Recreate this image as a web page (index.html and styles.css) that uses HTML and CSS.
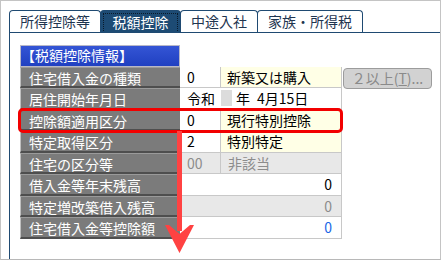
FILE: index.html
```html
<!DOCTYPE html>
<html lang="ja">
<head>
    <meta charset="UTF-8">
    <title>税額控除</title>
    <link rel="stylesheet" href="styles.css">
</head>
<body>
    <div class="frame">
        <div class="tabs">
            <div class="tab tab-1">所得控除等</div>
            <div class="tab tab-2 active"><span>税額控除</span></div>
            <div class="tab tab-3">中途入社</div>
            <div class="tab tab-4">家族・所得税</div>
        </div>

        <div class="panel">
            <div class="sheet">
                <div class="head">【税額控除情報】</div>
                <div class="blank"></div>

                <div class="label">住宅借入金の種類</div>
                <div class="val code">0</div>
                <div class="val desc">新築又は購入</div>
                <div class="btn-cell"><button class="btn" disabled>２以上(<u>T</u>)...</button></div>

                <div class="label">居住開始年月日</div>
                <div class="val date"><span class="era">令和</span><span class="box"></span><span>年</span><span class="md">4月15日</span></div>
                <div class="blank"></div>

                <div class="label">控除額適用区分</div>
                <div class="val code">0</div>
                <div class="val desc">現行特別控除</div>
                <div class="blank"></div>

                <div class="label">特定取得区分</div>
                <div class="val code">2</div>
                <div class="val desc">特別特定</div>
                <div class="blank"></div>

                <div class="label">住宅の区分等</div>
                <div class="val code off">00</div>
                <div class="val off">非該当</div>
                <div class="blank"></div>

                <div class="label">借入金等年末残高</div>
                <div class="val num">0</div>
                <div class="blank"></div>

                <div class="label">特定増改築借入残高</div>
                <div class="val num off">0</div>
                <div class="blank"></div>

                <div class="label">住宅借入金等控除額</div>
                <div class="val num total">0</div>
                <div class="blank"></div>

                <!-- highlight + arrow drawn on top of the table -->
                <div class="mark"></div>
                <svg class="arrow" width="26" height="124" viewBox="0 0 26 124">
                    <rect x="8" y="0" width="5" height="100" fill="#ff4242"/>
                    <polygon points="0,94 10.5,103 21,94 25,94 10.5,122 -4,94" fill="#ff4242"/>
                </svg>
            </div>
        </div>
    </div>
</body>
</html>
```

FILE: styles.css
```css
body {
    margin: 0;
    font-family: "Noto Sans CJK JP", "Noto Sans", sans-serif;
    font-size: 14px;
    color: #000;
    background: #fff;
}

.frame {
    width: 441px;
    height: 260px;
    box-sizing: border-box;
    border: 1px solid #c4c4c4;
    border-bottom-color: #b8b8b8;
    overflow: hidden;
    display: flex;
    flex-direction: column;
}

.tabs {
    display: flex;
    margin: 9px 0 0 8px;
    height: 22px;
}

.tab {
    box-sizing: border-box;
    height: 22px;
    border: 1px solid #1f4a72;
    border-bottom: none;
    border-radius: 4px 4px 0 0;
    color: #1f3550;
    line-height: 20px;
    text-align: center;
    margin-right: -1px;
}

.tab-1 { width: 92px; }
.tab-2 { width: 81px; }
.tab-3 { width: 78px; }
.tab-4 { width: 106px; }

.tab.active {
    background: #1d4b74;
    color: #fff;
    padding: 2px 2px 0;
}

.tab.active span {
    display: block;
    height: 18px;
    line-height: 16px;
    border: 1px dotted #0a1a2a;
}

.panel {
    flex: 1;
    margin-left: 8px;
    border-top: 1px solid #1f4a72;
    border-left: 1px solid #1f4a72;
    padding: 12px 0 0 10px;
}

.sheet {
    position: relative;
    display: grid;
    grid-template-columns: 160px 41px 121px 90px;
    grid-auto-rows: 21.5px;
    width: max-content;
}

.head {
    grid-column: 1;
    background: linear-gradient(#3556d6, #1f3fc0);
    color: #fff;
    line-height: 20px;
    padding-left: 1px;
    box-shadow: inset 0 0 0 1px #b8b8c8;
}

.head + .blank {
    grid-column: 2 / 5;
}

.label {
    grid-column: 1;
    background: #7b7b7b;
    color: #fff;
    line-height: 20px;
    padding-left: 8px;
    border-left: 1px solid #c0c0c0;
    border-top: 1px solid #9a9a9a;
    border-bottom: 2px solid #4e4e4e;
    box-sizing: border-box;
}

.val {
    box-sizing: border-box;
    border-bottom: 1px solid #c8c8c8;
    border-right: 1px solid #c8c8c8;
    line-height: 20px;
    padding-left: 7px;
    white-space: nowrap;
}

.sheet > .label:nth-child(3) ~ .val {
    border-top: none;
}

.code {
    grid-column: 2;
}

.desc {
    background: #ffffe6;
    padding-left: 6px;
}

.date {
    grid-column: 2 / 4;
    display: flex;
    align-items: center;
}

.date .box {
    width: 11px;
    height: 16px;
    background: #dcdcdc;
    margin: 0 4px 0 6px;
}

.date .md {
    margin-left: 7px;
}

.off {
    background: #e8e8e8;
    color: #8c8c8c;
}

.num {
    grid-column: 2 / 4;
    text-align: right;
    padding-right: 9px;
}

.total {
    color: #1a66e6;
}

.blank {
    grid-column: 4;
}

.btn-cell {
    padding: 1px 0 0 1px;
}

.btn {
    width: 89px;
    height: 21px;
    border: 1px solid #9c9c9c;
    border-radius: 4px;
    background: #d2d2d2;
    color: #8a8a8a;
    font: inherit;
    font-size: 14px;
    line-height: 18px;
    padding: 0;
}

.sheet .val:nth-of-type(2) {
    border-top: 1px solid #c8c8c8;
}

.mark {
    position: absolute;
    left: -2px;
    top: 63px;
    width: 325px;
    height: 25px;
    box-sizing: border-box;
    border: 3px solid #f20000;
    border-radius: 5px;
}

.arrow {
    position: absolute;
    left: 149px;
    top: 86px;
    overflow: visible;
}
```
